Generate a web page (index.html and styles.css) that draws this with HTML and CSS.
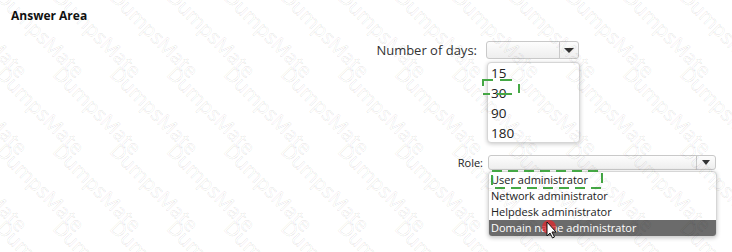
FILE: index.html
```html
<!DOCTYPE html>
<html lang="en">
<head>
  <meta charset="UTF-8">
  <title>Answer Area</title>
  <link rel="stylesheet" href="styles.css">
</head>
<body>
  <div class="page">
    <h1 class="title">Answer Area</h1>

    <div class="field days">
      <span class="label">Number of days:</span>
      <div class="control">
        <div class="select">
          <span class="value"></span>
          <span class="arrow"><i></i></span>
        </div>
        <ul class="list">
          <li>15</li>
          <li>30</li>
          <li>90</li>
          <li>180</li>
        </ul>
      </div>
    </div>

    <div class="field role">
      <span class="label">Role:</span>
      <div class="control">
        <div class="select">
          <span class="value"></span>
          <span class="arrow"><i></i></span>
        </div>
        <ul class="list">
          <li>User administrator</li>
          <li>Network administrator</li>
          <li>Helpdesk administrator</li>
          <li class="hover">Domain name administrator</li>
        </ul>
      </div>
    </div>

    <!-- answer markers and pointer -->
    <svg class="marks" width="732" height="252" viewBox="0 0 732 252">
      <g fill="none" stroke="#45a845" stroke-width="2">
        <path d="M483 80 H493 M500 80 H512 M519 84 V93 M483 79 V86 M483 94 H490 M497 94 H512"/>
        <rect x="492" y="171" width="110" height="17" stroke-dasharray="10 6"/>
      </g>
      <circle cx="549" cy="227" r="7" fill="#e0262b" opacity="0.75"/>
      <path d="M547 222 L547 236 L550 233 L552.5 238 L554.5 237 L552 232 L556 232 Z" fill="#fff" stroke="#111" stroke-width="1"/>
    </svg>

    <div class="watermark">
      <div class="wm-grid">
        <span>DumpsMate</span><span>DumpsMate</span><span>DumpsMate</span><span>DumpsMate</span><span>DumpsMate</span><span>DumpsMate</span><span>DumpsMate</span><span>DumpsMate</span><span>DumpsMate</span><span>DumpsMate</span><span>DumpsMate</span><span>DumpsMate</span><span>DumpsMate</span><span>DumpsMate</span>
        <span>DumpsMate</span><span>DumpsMate</span><span>DumpsMate</span><span>DumpsMate</span><span>DumpsMate</span><span>DumpsMate</span><span>DumpsMate</span><span>DumpsMate</span><span>DumpsMate</span><span>DumpsMate</span><span>DumpsMate</span><span>DumpsMate</span><span>DumpsMate</span><span>DumpsMate</span>
        <span>DumpsMate</span><span>DumpsMate</span><span>DumpsMate</span><span>DumpsMate</span><span>DumpsMate</span><span>DumpsMate</span><span>DumpsMate</span><span>DumpsMate</span><span>DumpsMate</span><span>DumpsMate</span><span>DumpsMate</span><span>DumpsMate</span><span>DumpsMate</span><span>DumpsMate</span>
        <span>DumpsMate</span><span>DumpsMate</span><span>DumpsMate</span><span>DumpsMate</span><span>DumpsMate</span><span>DumpsMate</span><span>DumpsMate</span><span>DumpsMate</span><span>DumpsMate</span><span>DumpsMate</span><span>DumpsMate</span><span>DumpsMate</span><span>DumpsMate</span><span>DumpsMate</span>
      </div>
    </div>
  </div>
</body>
</html>
```

FILE: styles.css
```css
body {
  margin: 0;
  background: #fff;
  font-family: "Open Sans", "Noto Sans", sans-serif;
  color: #222;
  overflow: hidden;
}
.page {
  position: relative;
  width: 732px;
  height: 252px;
  padding: 8px 0 0 11px;
  box-sizing: border-box;
  overflow: hidden;
}
.title {
  margin: 0;
  font-size: 12px;
  font-weight: bold;
  line-height: 16px;
  color: #111;
}
.field {
  display: flex;
  align-items: flex-start;
}
.field .label {
  text-align: right;
  color: #333;
}
.control {
  display: flex;
  flex-direction: column;
}
.select {
  display: flex;
  box-sizing: border-box;
  border: 1px solid #c9c9c9;
  border-radius: 3px;
  background: linear-gradient(#fdfdfd, #eeeeee);
}
.select .value {
  flex-grow: 1;
}
.select .arrow {
  display: flex;
  align-items: center;
  justify-content: center;
  border-left: 1px solid #c9c9c9;
}
.select .arrow i {
  width: 0;
  height: 0;
  border-left: 5px solid transparent;
  border-right: 5px solid transparent;
  border-top: 5px solid #333;
}
.list {
  list-style: none;
  margin: 0;
  padding: 0;
  background: #fff;
  border: 1px solid #d6d6d6;
  border-radius: 4px;
  box-shadow: 0 1px 4px rgba(0, 0, 0, 0.22);
  overflow: hidden;
}

/* number of days */
.days {
  margin-top: 17px;
}
.days .label {
  width: 466px;
  margin-right: 9px;
  font-size: 13px;
  line-height: 18px;
}
.days .select {
  width: 93px;
  height: 18px;
}
.days .arrow {
  width: 18px;
}
.days .list {
  width: 93px;
  height: 81px;
  box-sizing: border-box;
  margin: 3px 0 0 1px;
  padding: 0;
}
.days .list li {
  height: 20px;
  line-height: 20px;
  padding-left: 3px;
  font-size: 13.5px;
}

/* role */
.role {
  margin-top: 12px;
}
.role .label {
  width: 472px;
  margin-right: 5px;
  font-size: 11px;
  line-height: 15px;
  color: #222;
}
.role .select {
  width: 228px;
  height: 15px;
}
.role .arrow {
  width: 18px;
}
.role .arrow i {
  border-left-width: 4px;
  border-right-width: 4px;
  border-top-width: 5px;
}
.role .list {
  width: 229px;
  box-sizing: border-box;
  margin-top: 1px;
  padding-top: 0;
}
.role .list li {
  height: 16px;
  line-height: 16px;
  padding-left: 2px;
  font-size: 11px;
}
.role .list li.hover {
  background: #6b6b6b;
  color: #fff;
}

.marks {
  position: absolute;
  left: 0;
  top: 0;
  pointer-events: none;
}
.watermark {
  position: absolute;
  left: 0;
  top: 0;
  width: 732px;
  height: 252px;
  overflow: hidden;
  pointer-events: none;
}
.wm-grid {
  display: grid;
  grid-template-columns: repeat(14, 57px);
  grid-auto-rows: 77px;
  margin: -5px 0 0 -45px;
}
.wm-grid span {
  display: flex;
  align-items: center;
  justify-content: center;
  transform: rotate(45deg);
  font-family: "Open Sans", sans-serif;
  font-size: 20px;
  white-space: nowrap;
  color: transparent;
  -webkit-text-stroke: 0.5px rgba(0, 0, 0, 0.13);
}
```
